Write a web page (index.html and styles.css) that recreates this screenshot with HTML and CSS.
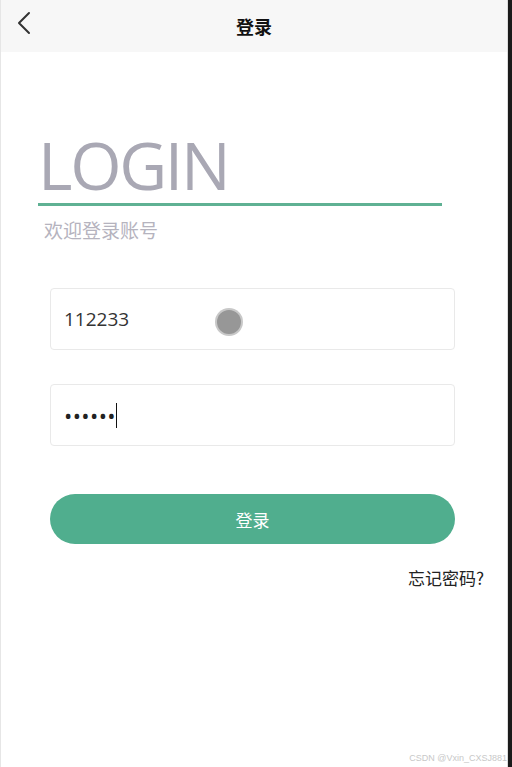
FILE: index.html
```html
<!DOCTYPE html>
<html lang="zh">
<head>
<meta charset="utf-8">
<title>登录</title>
<link rel="stylesheet" href="styles.css">
</head>
<body>
<div class="frame">
  <div class="page">
    <header class="topbar">
      <span class="back">
        <svg width="16" height="24" viewBox="0 0 16 24"><path d="M13 2 L3 12 L13 22" fill="none" stroke="#333" stroke-width="2" stroke-linecap="round" stroke-linejoin="round"/></svg>
      </span>
      <h1 class="title">登录</h1>
      <span class="spacer"></span>
    </header>
    <main class="content">
      <section class="hero">
        <div class="hero-title">LOGIN</div>
        <div class="hero-line"></div>
        <div class="hero-sub">欢迎登录账号</div>
      </section>
      <form class="form">
        <div class="field">
          <span class="value">112233</span>
          <span class="touch"></span>
        </div>
        <div class="field">
          <span class="dots">••••••</span><span class="caret"></span>
        </div>
        <button type="button" class="submit">登录</button>
      </form>
      <div class="forgot">忘记密码?</div>
      <div class="watermark">CSDN @Vxin_CXSJ881</div>
    </main>
  </div>
  <div class="edge"></div>
</div>
</body>
</html>
```
FILE: styles.css
```css
html, body {
  margin: 0;
  padding: 0;
  height: 100%;
}
body {
  font-family: "Open Sans", "Noto Sans CJK SC", sans-serif;
  background: #fff;
  color: #333;
}
.frame {
  display: flex;
  height: 767px;
}
.page {
  flex: 1;
  display: flex;
  flex-direction: column;
  border-left: 1px solid #e6e6e6;
  border-right: 1px solid #dcdcdc;
  min-width: 0;
}
.edge {
  width: 4px;
  background: #1a1a1a;
}
.topbar {
  height: 52px;
  background: #f7f7f7;
  display: grid;
  grid-template-columns: 60px 1fr 60px;
  align-items: center;
}
.back {
  display: flex;
  align-items: center;
  padding-left: 15px;
  height: 24px;
  margin-top: -6px;
}
.title {
  margin: 0;
  text-align: center;
  font-size: 18px;
  font-weight: 700;
  color: #111;
  font-family: "Noto Sans CJK SC", sans-serif;
}
.content {
  flex: 1;
  position: relative;
  display: flex;
  flex-direction: column;
}
.hero {
  padding-left: 37px;
  padding-top: 79px;
}
.hero-title {
  font-size: 66px;
  line-height: 66px;
  color: #a9a8b4;
  font-family: "Open Sans", sans-serif;
  letter-spacing: -2.3px;
}
.hero-line {
  width: 404px;
  height: 3px;
  background: #5fb193;
  margin-top: 6px;
}
.hero-sub {
  margin-top: 12px;
  padding-left: 6px;
  font-size: 19px;
  line-height: 24px;
  color: #b5b3be;
  font-family: "Noto Sans CJK SC", sans-serif;
}
.form {
  margin: 46px 0 0 49px;
  width: 405px;
  display: flex;
  flex-direction: column;
}
.field {
  position: relative;
  height: 62px;
  box-sizing: border-box;
  border: 1px solid #e9e9e9;
  border-radius: 4px;
  display: flex;
  align-items: center;
  padding-left: 13px;
  margin-bottom: 34px;
}
.value {
  font-size: 19px;
  color: #333;
}
.dots {
  font-size: 22px;
  color: #222;
  letter-spacing: 0.4px;
}
.caret {
  display: inline-block;
  width: 1px;
  height: 25px;
  background: #111;
  margin-left: 0px;
}
.touch {
  position: absolute;
  left: 166px;
  top: 21px;
  width: 24px;
  height: 24px;
  border-radius: 50%;
  background: #979797;
  box-shadow: 0 0 0 2px #c8c8c8;
}
.submit {
  margin-top: 14px;
  height: 50px;
  border: none;
  border-radius: 25px;
  background: #50ae8e;
  color: #fff;
  font-size: 17px;
  font-family: "Noto Sans CJK SC", sans-serif;
  padding: 0;
}
.forgot {
  align-self: flex-end;
  margin-top: 21px;
  margin-right: 23px;
  font-size: 17px;
  color: #222;
  font-family: "Noto Sans CJK SC", sans-serif;
}
.watermark {
  position: absolute;
  right: 0px;
  bottom: 4px;
  font-size: 9px;
  color: #c8c8c8;
  font-family: "Liberation Sans", sans-serif;
}
```
